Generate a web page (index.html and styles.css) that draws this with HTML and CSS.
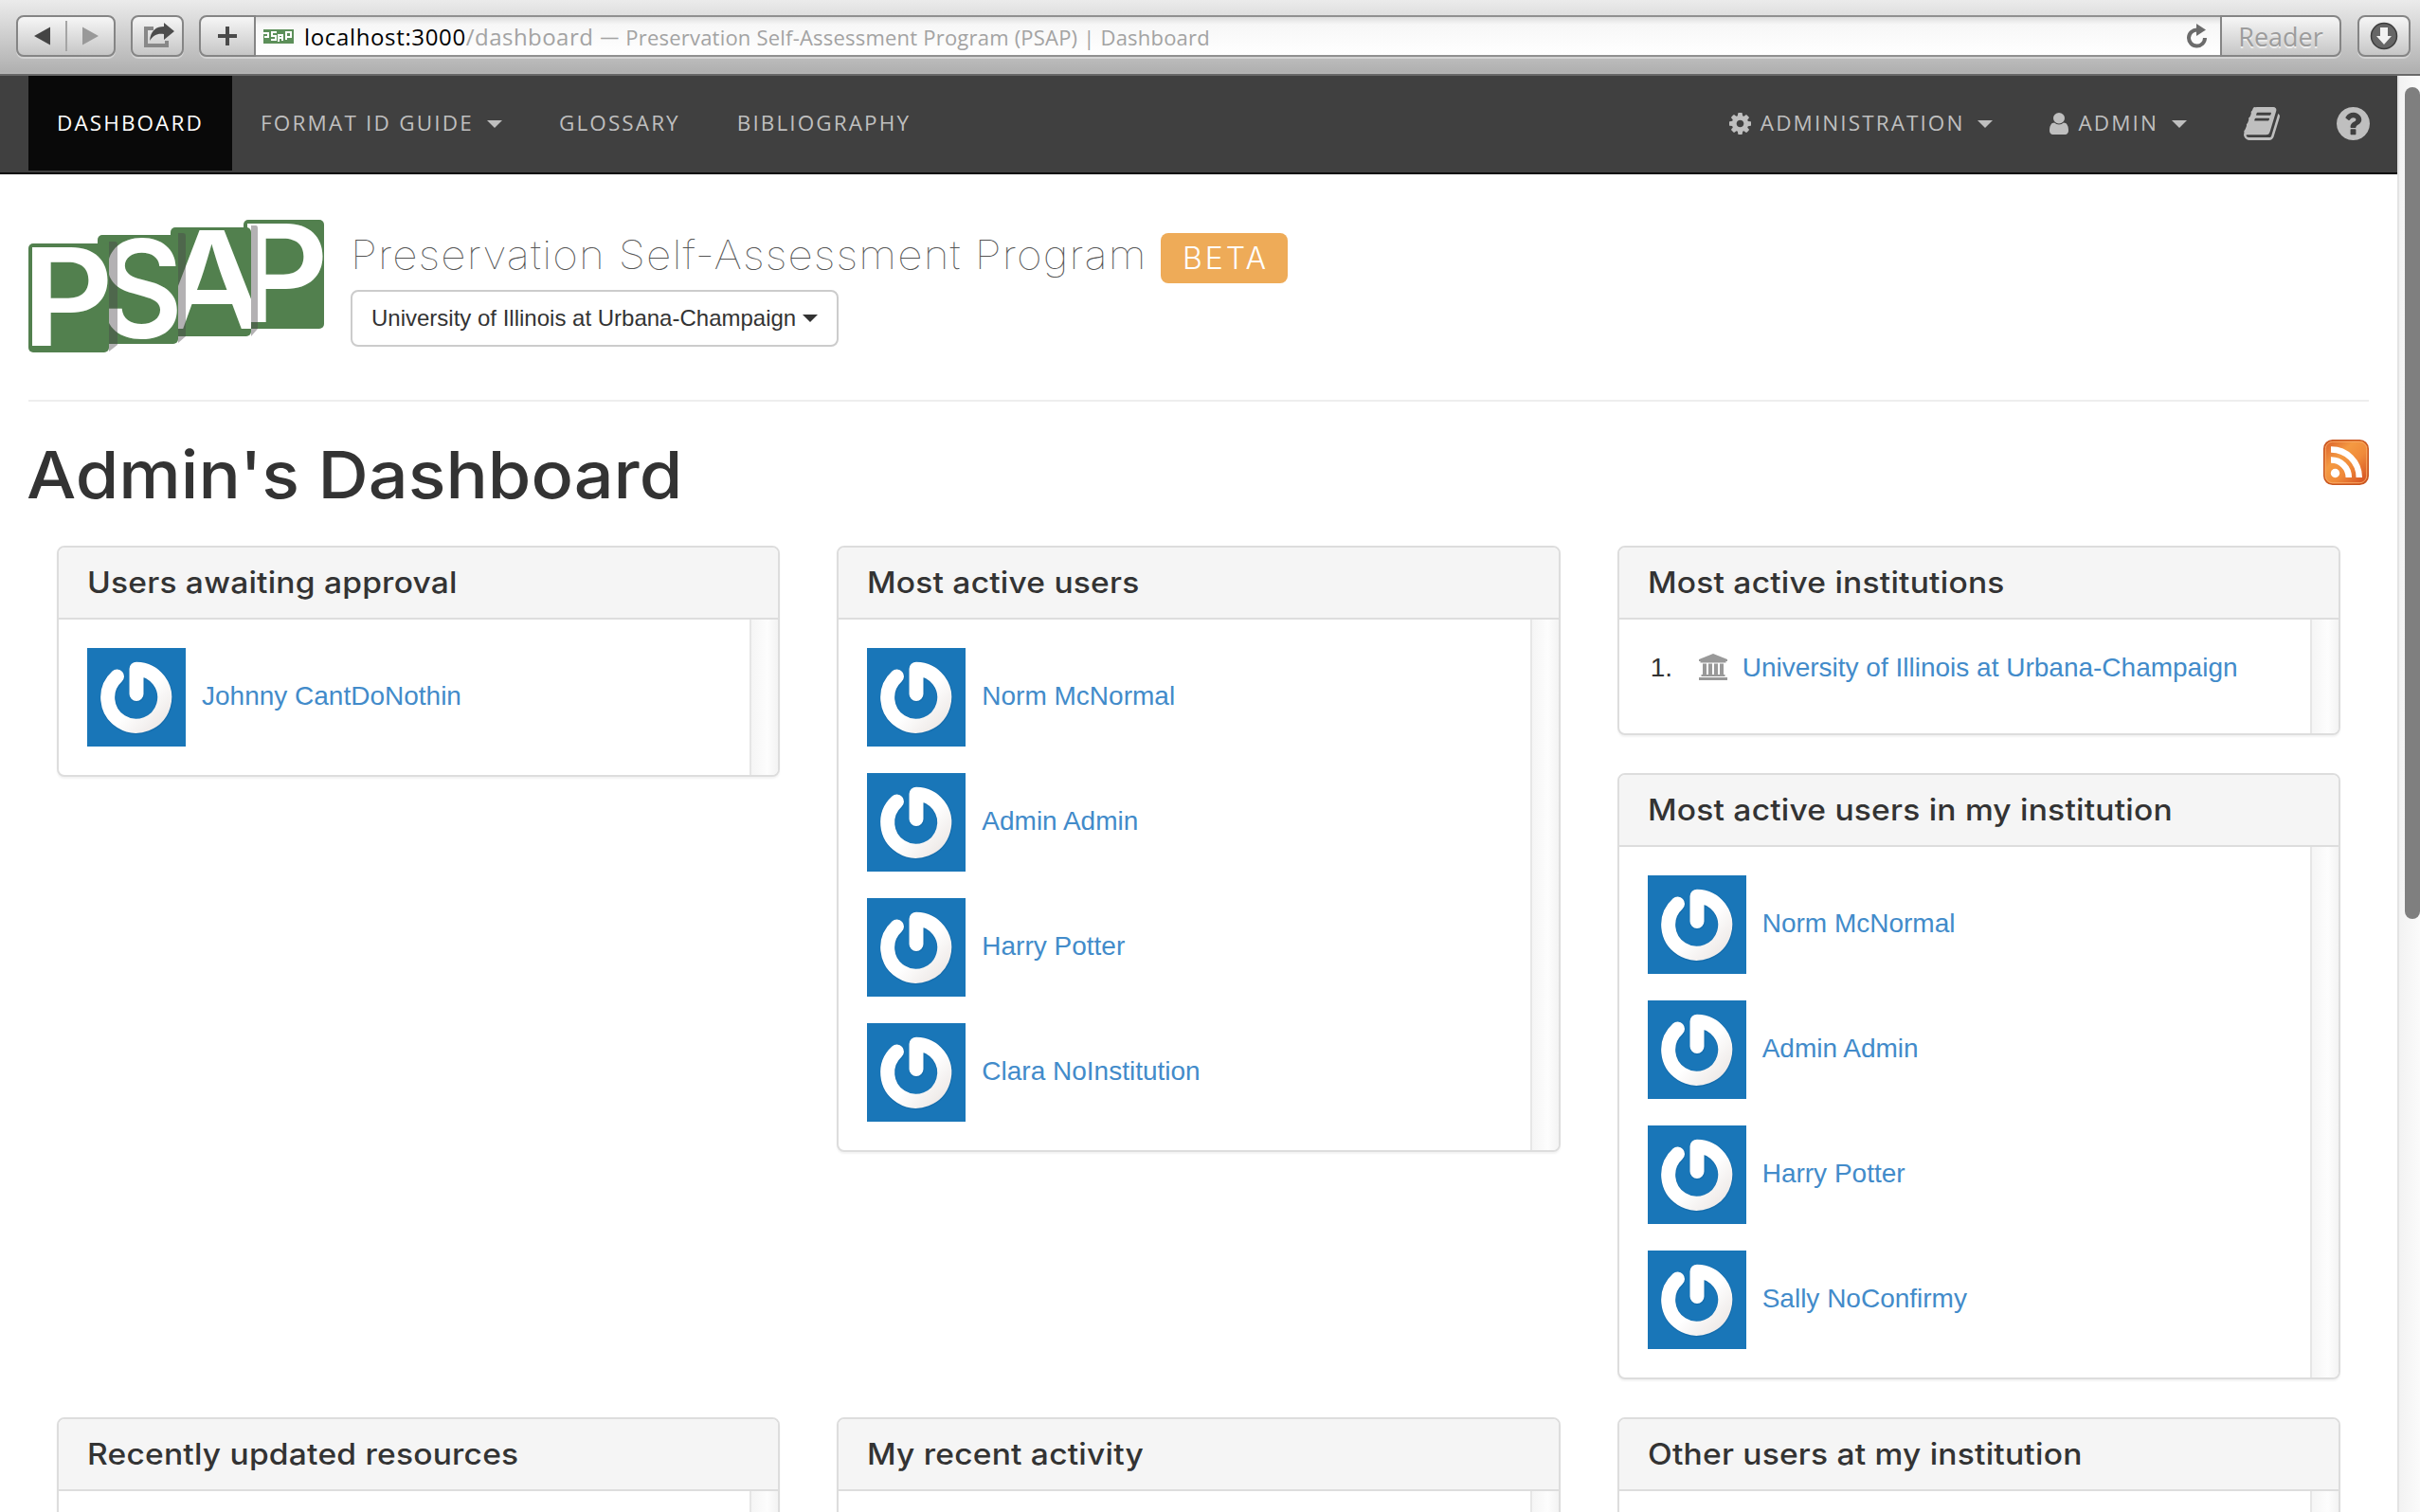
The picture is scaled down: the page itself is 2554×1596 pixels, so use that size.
FILE: index.html
```html
<!DOCTYPE html>
<html lang="en">
<head>
<meta charset="utf-8">
<title>Preservation Self-Assessment Program (PSAP) | Dashboard</title>
<link rel="stylesheet" href="styles.css">
</head>
<body>
<svg class="defs" aria-hidden="true">
  <defs>
    <linearGradient id="ring" x1="0" y1="0" x2="1" y2="1"><stop offset="0.55" stop-color="#fff"/><stop offset="1" stop-color="#ece7e5"/></linearGradient>
    <linearGradient id="rss-bg" x1="0" y1="0" x2="1" y2="1"><stop offset="0" stop-color="#d95b29"/><stop offset="0.35" stop-color="#f49a42"/><stop offset="0.6" stop-color="#f08a3a"/><stop offset="1" stop-color="#d0481f"/></linearGradient>
    <clipPath id="clip-a"><rect x="150" y="8" width="85" height="115" rx="5"/></clipPath>
    <symbol id="avatar" viewBox="0 0 104 104">
      <rect width="104" height="104" fill="#1976b8"/>
      <path d="M31.5 30A30 30 0 1 0 52 22.200V48.500" fill="none" stroke="#0c5a94" stroke-opacity=".3" stroke-width="16.500" stroke-linecap="round" stroke-linejoin="round" transform="translate(0.300 0.600)"/>
      <path d="M31.500 30A30 30 0 1 0 52 22.200V48.500" fill="none" stroke="url(#ring)" stroke-width="15" stroke-linecap="round" stroke-linejoin="round"/>
    </symbol>
  </defs>
</svg>

<header class="chrome">
  <div class="btn history">
    <svg width="104" height="44" viewBox="0 0 104 44"><path d="M18 22l17-9.500v19z" fill="#444"/><path d="M52 6v32" stroke="#a5a5a5" stroke-width="2"/><path d="M86 22l-17-9.500v19z" fill="#999"/></svg>
  </div>
  <div class="btn share">
    <svg width="56" height="44" viewBox="0 0 56 44"><path d="M24 14H16V32H38V27" fill="none" stroke="#888" stroke-width="4"/><path d="M20 27C21 16 27 12 35 12V8L46 17L35 26V20C28 19 24 21 20 27z" fill="#4c4c4c"/></svg>
  </div>
  <div class="address">
    <div class="btn plus"><svg width="58" height="44" viewBox="0 0 58 44"><path d="M29 12v20M19 22h20" stroke="#4a4a4a" stroke-width="4"/></svg></div>
    <div class="url">
      <svg class="favicon" width="32" height="15" viewBox="0 0 32 15"><rect width="32" height="15" fill="#5c8f59"/><path d="M0 4h5v4H1M14 3H9v4h4v4H8M16 13V6h4v6M16 9h4M24 11V3h5v5h-5" fill="none" stroke="#fff" stroke-width="2"/></svg>
      <span class="host">localhost:3000</span><span class="path">/dashboard</span><span class="dash">—</span><span class="doc-title">Preservation Self-Assessment Program (PSAP) | Dashboard</span>
      <svg class="reload" width="22" height="26" viewBox="0 0 22 26"><path d="M11 6.500A8.500 8.500 0 1 0 19 15" fill="none" stroke="#6b6b6b" stroke-width="4"/><path d="M10 0l10 6.500-10 6.500z" fill="#6b6b6b"/></svg>
    </div>
    <div class="btn reader">Reader</div>
  </div>
  <div class="btn download">
    <svg width="56" height="44" viewBox="0 0 56 44"><circle cx="28" cy="22" r="13.500" fill="#666" stroke="#3c3c3c" stroke-width="1.500"/><path d="M24 13h8v9h4l-8 9-8-9h4z" fill="#f2f2f2"/></svg>
  </div>
</header>

<div class="viewport">
<main class="page">
  <nav class="navbar">
    <a class="nav-link active"><span>Dashboard</span></a>
    <a class="nav-link guide"><span>Format ID Guide</span><i class="caret"></i></a>
    <a class="nav-link"><span>Glossary</span></a>
    <a class="nav-link"><span>Bibliography</span></a>
    <a class="nav-link right"><svg class="i-gear" width="23" height="23" viewBox="128 128 1536 1536"><path d="M1152 896q0-106-75-181t-181-75-181 75-75 181 75 181 181 75 181-75 75-181zm512-109v222q0 12-8 23t-20 13l-185 28q-19 54-39 91 35 50 107 138 10 12 10 25t-9 23q-27 37-99 108t-94 71q-12 0-26-9l-138-108q-44 23-91 38-16 136-29 186-7 28-36 28h-222q-14 0-24.500-8.500t-11.500-21.500l-28-184q-49-16-90-37l-141 107q-10 9-25 9-14 0-25-11-126-114-165-168-7-10-7-23 0-12 8-23 15-21 51-66.500t54-70.500q-27-50-41-99l-183-27q-13-2-21-12.500t-8-23.500v-222q0-12 8-23t19-13l186-28q14-46 39-92-40-57-107-138-10-12-10-24 0-10 9-23 26-36 98.500-107.500t94.500-71.500q13 0 26 10l138 107q44-23 91-38 16-136 29-186 7-28 36-28h222q14 0 24.500 8.500t11.500 21.500l28 184q49 16 90 37l142-107q9-9 24-9 13 0 25 10 129 119 165 170 7 8 7 22 0 12-8 23-15 21-51 66.500t-54 70.500q26 50 41 98l183 28q13 2 21 12.500t8 23.500z"/></svg><span>Administration</span><i class="caret"></i></a>
    <a class="nav-link"><svg class="i-user" width="20" height="23" viewBox="256 128 1280 1536" preserveAspectRatio="none"><path d="M1536 1399q0 109-62.500 187t-150.500 78h-854q-88 0-150.500-78t-62.500-187q0-85 8.500-160.500t31.500-152 58.500-131 94-89 134.500-34.500q131 128 313 128t313-128q76 0 134.500 34.500t94 89 58.500 131 31.500 152 8.500 160.500zm-256-887q0 159-112.500 271.500t-271.500 112.500-271.500-112.500-112.500-271.500 112.500-271.500 271.500-112.500 271.500 112.500 112.500 271.500z"/></svg><span>Admin</span><i class="caret"></i></a>
    <a class="nav-link"><svg width="38" height="35" viewBox="62 128 1668 1536"><path d="M1703 478q40 57 18 129l-275 906q-19 64-76.500 107.500t-122.500 43.500h-923q-77 0-148.500-53.500t-99.500-131.500q-24-67-2-127 0-4 3-27t4-37q1-8-3-21.500t-3-19.500q2-11 8-21t16.500-23.500 16.500-23.500q23-38 45-91.500t30-91.500q3-10 .5-30t-.5-28q3-11 17-28t17-23q21-36 42-92t25-90q1-9-2.500-32t.5-28q4-13 22-30.500t22-22.500q19-26 42.500-84.500t27.500-96.500q1-8-3-25.500t-2-26.500q2-8 9-18t18-23 17-21q8-12 16.500-30.500t15-35 16-36 19.500-32 26.500-23.500 36-11.500 47.500 5.500l-1 3q38-9 51-9h761q74 0 114 56t18 130l-274 906q-36 119-71.500 153.500t-128.500 34.500h-869q-27 0-38 15-11 16-1 43 24 70 144 70h923q29 0 56-15.500t35-41.500l300-987q7-22 5-57 38 15 59 43zm-1064 2q-4 13 2 22.500t20 9.500h608q13 0 25.500-9.500t16.500-22.500l21-64q4-13-2-22.500t-20-9.500h-608q-13 0-25.500 9.500t-16.500 22.500zm-83 256q-4 13 2 22.500t20 9.500h608q13 0 25.500-9.500t16.500-22.500l21-64q4-13-2-22.500t-20-9.500h-608q-13 0-25.500 9.500t-16.500 22.500z"/></svg></a>
    <a class="nav-link help"><svg width="35" height="35" viewBox="128 128 1536 1536"><path d="M1024 1376v-192q0-14-9-23t-23-9h-192q-14 0-23 9t-9 23v192q0 14 9 23t23 9h192q14 0 23-9t9-23zm256-672q0-88-55.500-163t-138.500-116-170-41q-243 0-371 213-15 24 8 42l132 100q7 6 19 6 16 0 25-12 53-68 86-92 34-24 86-24 48 0 85.500 26t37.500 59q0 38-20 61t-68 45q-63 28-115.500 86.500t-52.500 125.500v36q0 14 9 23t23 9h192q14 0 23-9t9-23q0-19 21.500-49.500t54.500-49.500q32-18 49-28.500t46-35 44.500-48 28-60.500 12.500-81zm384 192q0 209-103 385.500t-279.500 279.500-385.500 103-385.500-103-279.500-279.500-103-385.500 103-385.500 279.500-279.500 385.500-103 385.500 103 279.500 279.500 103 385.500z"/></svg></a>
  </nav>

  <section class="masthead">
    <svg class="logo" width="312" height="140" viewBox="0 0 312 140">
      <g class="tile"><rect x="227" y="0" width="85" height="115" rx="5"/><text x="220" y="107.500" textLength="97" lengthAdjust="spacingAndGlyphs">P</text></g>
      <path class="shade" d="M235 6h5q2 0 2 3v106l-7 8z"/>
      <g class="tile"><rect x="150" y="8" width="85" height="115" rx="5"/><text clip-path="url(#clip-a)" x="137" y="115" textLength="114" lengthAdjust="spacingAndGlyphs">A</text></g>
      <path class="shade" d="M158 14h5q3 0 3 3v106l-8 7z"/>
      <g class="tile"><rect x="73" y="16" width="85" height="115" rx="5"/><text x="75" y="124" textLength="88" lengthAdjust="spacingAndGlyphs">S</text></g>
      <path class="shade" d="M85 23h6q3 0 3 3v106l-9 7z"/>
      <g class="tile"><rect x="0" y="25" width="85" height="115" rx="5"/><text x="-7" y="133" textLength="97" lengthAdjust="spacingAndGlyphs">P</text></g>
    </svg>
    <div class="brand">
      <h2 class="brand-name"><span class="wide">Preservation Self-Assessment Program</span><span class="beta">BETA</span></h2>
      <button class="picker"><span>University of Illinois at Urbana-Champaign</span><i class="caret"></i></button>
    </div>
  </section>

  <div class="title-row">
    <h1><span class="wide">Admin's Dashboard</span></h1>
    <svg class="rss" width="48" height="48" viewBox="0 0 48 48"><rect x="0.750" y="0.750" width="46.500" height="46.500" rx="9" fill="url(#rss-bg)" stroke="#c9561f" stroke-width="1.500"/><rect x="2.300" y="2.300" width="43.400" height="43.400" rx="7.500" fill="none" stroke="#f7a864" stroke-width="1"/><circle cx="12.500" cy="35.500" r="4.700" fill="#fff"/><path d="M8 21.500A18.500 18.500 0 0 1 26.800 40M8 10.500A29.500 29.500 0 0 1 37.800 40" fill="none" stroke="#fff" stroke-width="6.500"/></svg>
  </div>

  <div class="grid">
    <div class="col">
      <section class="panel"><h3><span class="wide">Users awaiting approval</span></h3><div class="body"><ul class="people">
        <li><svg class="avatar"><use href="#avatar"/></svg><a>Johnny CantDoNothin</a></li>
      </ul><div class="track"></div></div></section>
    </div>
    <div class="col">
      <section class="panel"><h3><span class="wide">Most active users</span></h3><div class="body"><ul class="people">
        <li><svg class="avatar"><use href="#avatar"/></svg><a>Norm McNormal</a></li>
        <li><svg class="avatar"><use href="#avatar"/></svg><a>Admin Admin</a></li>
        <li><svg class="avatar"><use href="#avatar"/></svg><a>Harry Potter</a></li>
        <li><svg class="avatar"><use href="#avatar"/></svg><a>Clara NoInstitution</a></li>
      </ul><div class="track"></div></div></section>
    </div>
    <div class="col">
      <section class="panel"><h3><span class="wide">Most active institutions</span></h3><div class="body"><div class="ranking">
        <span class="num">1.</span><svg class="bank" width="30" height="28" viewBox="0 0 30 28"><path d="M15 0L30 6V8H28.500V9.500H1.500V8H0V6zM4 10.500h4V22h2V10.500h4V22h2V10.500h4V22h2V10.500h4V22h1.500v2h-25v-2H4zM0 25h30v3H0z"/></svg><a>University of Illinois at Urbana-Champaign</a>
      </div><div class="track"></div></div></section>
      <section class="panel"><h3><span class="wide">Most active users in my institution</span></h3><div class="body"><ul class="people">
        <li><svg class="avatar"><use href="#avatar"/></svg><a>Norm McNormal</a></li>
        <li><svg class="avatar"><use href="#avatar"/></svg><a>Admin Admin</a></li>
        <li><svg class="avatar"><use href="#avatar"/></svg><a>Harry Potter</a></li>
        <li><svg class="avatar"><use href="#avatar"/></svg><a>Sally NoConfirmy</a></li>
      </ul><div class="track"></div></div></section>
    </div>
  </div>
  <div class="grid">
    <div class="col"><section class="panel"><h3><span class="wide">Recently updated resources</span></h3><div class="body tall"><ul class="people"></ul><div class="track"></div></div></section></div>
    <div class="col"><section class="panel"><h3><span class="wide">My recent activity</span></h3><div class="body tall"><ul class="people"></ul><div class="track"></div></div></section></div>
    <div class="col"><section class="panel"><h3><span class="wide">Other users at my institution</span></h3><div class="body tall"><ul class="people"></ul><div class="track"></div></div></section></div>
  </div>
</main>
<div class="scrollbar"><div class="thumb"></div></div>
</div>
</body>
</html>
```

FILE: styles.css
```css
* { box-sizing: border-box; }
html, body { margin: 0; height: 1596px; overflow: hidden; background: #fff; }
body { font-family: "Liberation Sans", Arial, sans-serif; font-size: 28px; color: #333; display: flex; flex-direction: column; }
ul, h1, h2, h3 { margin: 0; padding: 0; }
.defs { position: absolute; width: 0; height: 0; }
svg { display: block; flex: none; }

/* browser toolbar */
.chrome { flex: none; height: 80px; padding: 16px 10px 0 17px; display: flex; align-items: flex-start; background: linear-gradient(#ebebeb, #dcdcdc 20px, #b0b0b0 76px, #b8b8b8 78px, #696969 78px); font-family: "Open Sans", "Noto Sans", sans-serif; }
.btn { height: 44px; border: 2px solid #858585; border-radius: 8px; background: linear-gradient(#f6f6f6, #c6c6c6); box-shadow: 0 2px 0 rgba(255,255,255,.35); display: flex; align-items: center; justify-content: center; }
.history { width: 105px; margin-right: 16px; }
.share { width: 56px; margin-right: 16px; }
.address { flex: 1; display: flex; margin-right: 17px; }
.plus { width: 60px; border-radius: 8px 0 0 8px; }
.url { flex: 1; height: 44px; display: flex; align-items: center; border: solid #909090; border-width: 2px 0; background: linear-gradient(#dedede, #f7f7f7 8px, #fff); box-shadow: 0 2px 0 rgba(255,255,255,.35); padding-left: 8px; white-space: pre; color: #a3a3a3; line-height: 42px; }
.url span { padding-top: 1px; }
.favicon { margin-right: 11px; }
.host { color: #000; font-size: 24px; letter-spacing: .65px; }
.path { font-size: 24px; letter-spacing: .45px; }
.dash { font-size: 20px; margin: 0 7px; }
.doc-title { font-size: 22px; letter-spacing: .21px; }
.reload { margin: 0 13px 0 auto; }
.reader { width: 128px; border-radius: 0 8px 8px 0; font-size: 27px; color: #9c9c9c; text-shadow: 0 2px 0 #eee; }
.download { width: 56px; }

.viewport { flex: 1; display: flex; min-height: 0; }
.page { flex: 1; overflow: hidden; }
.scrollbar { width: 24px; padding: 12px 0 0 6px; border-left: 2px solid #e3e3e3; background: linear-gradient(90deg, #f2f2f2, #fbfbfb); }
.thumb { width: 16px; height: 878px; border-radius: 8px; background: #7f7f7f; }

/* site navigation */
.navbar { height: 104px; padding-left: 30px; border-bottom: 2px solid #080808; background: #404040; display: flex; }
.nav-link { height: 100px; display: flex; align-items: center; color: #bfbfbf; fill: #bfbfbf; font-family: "Open Sans", sans-serif; font-size: 22.5px; line-height: 100px; letter-spacing: 2.1px; text-transform: uppercase; padding: 0 30px; white-space: nowrap; }
.active { width: 215px; background: #090909; color: #fff; }
.guide { letter-spacing: 2.2px; }
.caret { display: block; width: 0; height: 0; border: 8px solid transparent; border-top-color: currentColor; border-bottom: 0; }
.nav-link .caret { margin: 2px 0 0 14px; }
.right { margin-left: auto; }
.help { padding-right: 29px; }
.i-gear, .i-user { margin-right: 10px; }

/* masthead */
.wide { display: inline-block; transform-origin: 0 50%; white-space: nowrap; }
.masthead { margin: 0 30px; height: 240px; padding-top: 48px; border-bottom: 2px solid #eee; display: flex; gap: 28px; }
.tile rect { fill: #52804e; }
.logo text { fill: #fff; font: 600 143px Inter, sans-serif; }
.shade { fill: #4b444b; fill-opacity: .42; }
.brand-name { display: flex; align-items: flex-start; height: 74px; padding-top: 14px; font: 100 42px/45px Inter, sans-serif; color: #555; white-space: nowrap; }
.brand-name .wide { width: 769px; letter-spacing: 1px; transform: scaleX(1.094); }
.beta { height: 53px; width: 134px; margin-left: 86px; padding-left: 3px; border-radius: 8px; background: #eeab58; color: #fff; font-size: 32px; font-weight: 300; line-height: 53px; text-align: center; letter-spacing: 3px; }
.picker { height: 60px; width: 515px; padding: 0 0 0 20px; border: 2px solid #ccc; border-radius: 8px; background: #fff; font: 24px "Liberation Sans", Arial, sans-serif; color: #333; display: flex; align-items: center; gap: 7px; }

.title-row { margin: 0 30px; height: 152px; padding-top: 40px; display: flex; justify-content: space-between; }
h1 { margin: -1px 0 0 -2px; font: 500 69px/76px Inter, sans-serif; }
h1 .wide { transform: scaleX(1.069); }

/* panels */
.grid { display: grid; grid-template-columns: repeat(3, 1fr); margin: 0 30px; }
.col { padding: 0 30px; }
.panel { margin-bottom: 40px; border: 2px solid #ddd; border-radius: 8px; box-shadow: 0 2px 2px rgba(0,0,0,.05); overflow: hidden; background: #fff; }
h3 { height: 76px; padding-left: 30px; background: #f5f5f5; border-bottom: 2px solid #ddd; font: 500 31px/74px Inter, sans-serif; }
h3 .wide { letter-spacing: .2px; transform: scaleX(1.082); }
.body { display: flex; }
.people { flex: 1; list-style: none; padding: 30px; display: flex; flex-direction: column; gap: 28px; }
.people li { display: flex; align-items: center; height: 104px; }
.avatar { width: 104px; height: 104px; margin-right: 17px; }
a { color: #428bca; }
.people a { line-height: 32px; margin-top: -3px; }
.track { width: 30px; border-left: 2px solid #e6e6e6; background: linear-gradient(90deg, #f5f5f5, #fdfdfd 60%, #f3f3f3); }
.ranking { flex: 1; height: 120px; padding: 30px; display: flex; align-items: flex-start; line-height: 41px; }
.num { width: 54px; padding-left: 3px; }
.bank { fill: #999; margin: 6px 16px 0 0; }
.tall { height: 300px; }
```
